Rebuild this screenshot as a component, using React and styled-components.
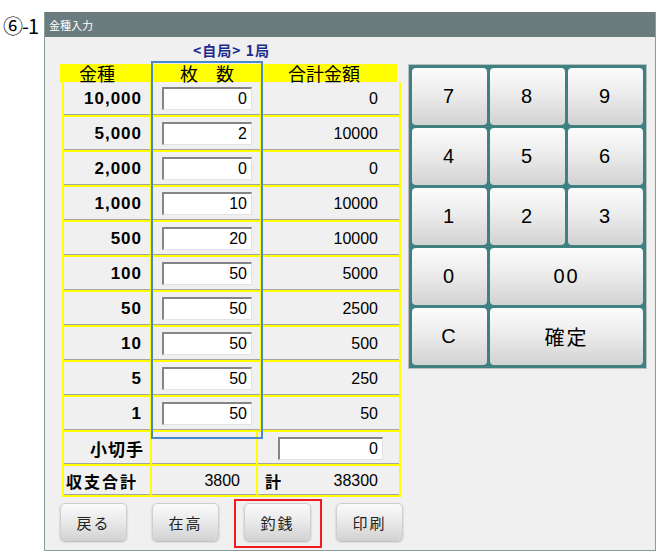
import styled, { createGlobalStyle } from 'styled-components'

const GlobalStyle = createGlobalStyle`
  html, body {
    margin: 0;
    padding: 0;
    background: #ffffff;
  }
  body {
    font-family: "Liberation Sans", "Noto Sans CJK JP", sans-serif;
    color: #000;
  }
`

const denoms = [
	{ label: '10,000', count: 0, total: 0 },
	{ label: '5,000', count: 2, total: 10000 },
	{ label: '2,000', count: 0, total: 0 },
	{ label: '1,000', count: 10, total: 10000 },
	{ label: '500', count: 20, total: 10000 },
	{ label: '100', count: 50, total: 5000 },
	{ label: '50', count: 50, total: 2500 },
	{ label: '10', count: 50, total: 500 },
	{ label: '5', count: 50, total: 250 },
	{ label: '1', count: 50, total: 50 },
]

const keys = [
	{ k: '7' }, { k: '8' }, { k: '9' },
	{ k: '4' }, { k: '5' }, { k: '6' },
	{ k: '1' }, { k: '2' }, { k: '3' },
	{ k: '0' }, { k: '00', wide: true },
	{ k: 'C' }, { k: '確定', wide: true },
]

function App() {
	return (
		<Page>
			<GlobalStyle />
			<StepLabel>⑥-1</StepLabel>
			<Window>
				<TitleBar>金種入力</TitleBar>
				<Body>
					<Heading>&lt;自局&gt;&nbsp;1局</Heading>

					<TableArea>
						<Header>
							<HeadCell $pr={18}>金種</HeadCell>
							<HeadCell>枚　数</HeadCell>
							<HeadCell $pr={11}>合計金額</HeadCell>
						</Header>
						<TableBox>
							{denoms.map((d) => (
								<Row key={d.label}>
									<DenomCell>{d.label}</DenomCell>
									<CountCell>
										<NumInput readOnly value={d.count} $w={90} />
									</CountCell>
									<ValueCell>{d.total}</ValueCell>
								</Row>
							))}
							<Row $cols="88px 106px 1fr" $h={34}>
								<DenomCell $pr={6}>小切手</DenomCell>
								<CountCell />
								<ValueCell $pl={20}>
									<NumInput readOnly value={0} $w={105} />
								</ValueCell>
							</Row>
							<Row $cols="88px 106px 1fr" $h={31}>
								<SumLabel>収支合計</SumLabel>
								<CountCell $right>3800</CountCell>
								<TotalCell>
									<b>計</b>
									<span>38300</span>
								</TotalCell>
							</Row>
						</TableBox>
						<Highlight />
					</TableArea>

					<Keypad>
						{keys.map((key) => (
							<Key key={key.k} $wide={key.wide}>{key.k}</Key>
						))}
					</Keypad>

					<ButtonBar>
						<ActionButton>戻る</ActionButton>
						<ActionButton>在高</ActionButton>
						<ActionButton $marked>釣銭</ActionButton>
						<ActionButton>印刷</ActionButton>
					</ButtonBar>
				</Body>
			</Window>
		</Page>
	)
}

export default App

const Page = styled.div`
	display: flex;
	align-items: flex-start;
	padding-top: 12px;
	width: 670px;
	height: 552px;
	box-sizing: border-box;
`

const StepLabel = styled.div`
	width: 44px;
	box-sizing: border-box;
	padding-left: 3px;
	padding-top: 1px;
	font-family: "Noto Sans CJK JP", sans-serif;
	font-size: 20px;
	line-height: 25px;
	letter-spacing: -1px;
`

const Window = styled.div`
	width: 612px;
	height: 539px;
	box-sizing: border-box;
	border: 1px solid #8e9b9d;
	border-top: none;
	background: #f0f0f0;
	display: flex;
	flex-direction: column;
`

const TitleBar = styled.div`
	height: 25px;
	background: #6b7b7e;
	color: #ffffff;
	font-family: "Noto Sans CJK JP", sans-serif;
	font-size: 11px;
	display: flex;
	align-items: center;
	padding-left: 4px;
`

const Body = styled.div`
	display: grid;
	grid-template-columns: 341px 239px;
	grid-template-rows: 27px auto auto;
	column-gap: 7px;
	padding: 0 8px 0 15px;
`

const Heading = styled.div`
	grid-column: 1;
	grid-row: 1;
	align-self: end;
	padding-bottom: 5px;
	padding-left: 2px;
	text-align: center;
	font-family: "Noto Sans CJK JP", sans-serif;
	font-weight: bold;
	font-size: 14px;
	line-height: 17px;
	letter-spacing: 1px;
	color: #1c2c8c;
`

const TableArea = styled.div`
	grid-column: 1;
	grid-row: 2;
	position: relative;
`

const Header = styled.div`
	width: 337px;
	height: 18px;
	background: #ffff00;
	display: grid;
	grid-template-columns: 92px 110px 135px;
`

const HeadCell = styled.div`
	text-align: center;
	padding-right: ${(p) => p.$pr || 0}px;
	font-family: "Noto Sans CJK JP", sans-serif;
	font-size: 18px;
	line-height: 19px;
`

const TableBox = styled.div`
	margin-left: 2px;
	width: 339px;
	box-sizing: border-box;
	border-left: 2px solid #ffff00;
	border-right: 2px solid #ffff00;
`

const Row = styled.div`
	display: grid;
	grid-template-columns: ${(p) => p.$cols || '88px 110px 1fr'};
	height: ${(p) => p.$h || 35}px;
	box-sizing: border-box;
	border-bottom: 2px solid #ffff00;
	box-shadow: inset 0 -1px 0 #a4a4a4;
	align-items: center;
`

const DenomCell = styled.div`
	height: 100%;
	box-sizing: border-box;
	border-right: 2px solid #ffff00;
	display: flex;
	align-items: center;
	justify-content: flex-end;
	padding-right: ${(p) => p.$pr || 8}px;
	font-weight: bold;
	font-size: 17px;
	letter-spacing: 1px;
	font-family: "Liberation Sans", "Noto Sans CJK JP", sans-serif;
`

const SumLabel = styled(DenomCell)`
	justify-content: flex-start;
	padding-left: 2px;
	padding-right: 0;
	font-size: 16px;
	letter-spacing: 2px;
	font-family: "Noto Sans CJK JP", sans-serif;
`

const CountCell = styled.div`
	height: 100%;
	box-sizing: border-box;
	border-right: 2px solid #ffff00;
	display: flex;
	align-items: center;
	justify-content: ${(p) => (p.$right ? 'flex-end' : 'flex-start')};
	padding: ${(p) => (p.$right ? '0 16px 0 0' : '0 0 0 10px')};
	font-size: 16px;
`

const ValueCell = styled.div`
	display: flex;
	align-items: center;
	justify-content: ${(p) => (p.$pl ? 'flex-start' : 'flex-end')};
	padding-right: 21px;
	padding-left: ${(p) => p.$pl || 0}px;
	font-size: 16px;
`

const TotalCell = styled.div`
	display: flex;
	align-items: center;
	justify-content: space-between;
	padding: 0 21px 0 7px;
	font-size: 16px;

	b {
		font-family: "Noto Sans CJK JP", sans-serif;
		font-size: 16px;
	}
`

const NumInput = styled.input`
	width: ${(p) => p.$w}px;
	height: 23px;
	box-sizing: border-box;
	background: #ffffff;
	border-style: solid;
	border-width: 2px 1px 1px 2px;
	border-color: #858585 #e2e2e2 #e2e2e2 #858585;
	text-align: right;
	padding: 0 4px 0 0;
	font-family: "Liberation Sans", sans-serif;
	font-size: 16px;
	color: #000;

	&:focus {
		outline: none;
	}
`

const Highlight = styled.div`
	position: absolute;
	left: 91px;
	top: -3px;
	width: 112px;
	height: 378px;
	box-sizing: border-box;
	border: 2px solid #4a88cc;
	pointer-events: none;
`

const Keypad = styled.div`
	grid-column: 2;
	grid-row: 2;
	align-self: start;
	box-sizing: border-box;
	border: 1px solid #b9bfbf;
	background: #3f8180;
	padding: 3px;
	display: grid;
	grid-template-columns: repeat(3, 1fr);
	grid-auto-rows: 57px;
	gap: 3px;
	height: 305px;
`

const Key = styled.button`
	grid-column: span ${(p) => (p.$wide ? 2 : 1)};
	border: none;
	border-radius: 4px;
	background: linear-gradient(#fcfcfc, #ececec 45%, #d2d2d2);
	font-family: "Liberation Sans", "Noto Sans CJK JP", sans-serif;
	font-size: 20px;
	color: #000;
	letter-spacing: 2px;
	cursor: pointer;
`

const ButtonBar = styled.div`
	grid-column: 1 / span 2;
	grid-row: 3;
	display: flex;
	gap: 25px;
	margin-top: 6px;
`

const ActionButton = styled.button`
	position: relative;
	width: 67px;
	height: 38px;
	border: 1px solid #cfcfcf;
	border-radius: 5px;
	background: linear-gradient(#fafafa, #e9e9e9 50%, #d3d3d3);
	box-shadow: 0 1px 2px rgba(0, 0, 0, 0.25);
	font-family: "Noto Sans CJK JP", sans-serif;
	font-size: 15px;
	color: #222;
	letter-spacing: 2px;
	cursor: pointer;

	${(p) =>
		p.$marked &&
		`
		&::after {
			content: '';
			position: absolute;
			top: -5px;
			left: -11px;
			right: -12px;
			bottom: -8px;
			border: 2px solid #ee1c1c;
			pointer-events: none;
		}
	`}
`
